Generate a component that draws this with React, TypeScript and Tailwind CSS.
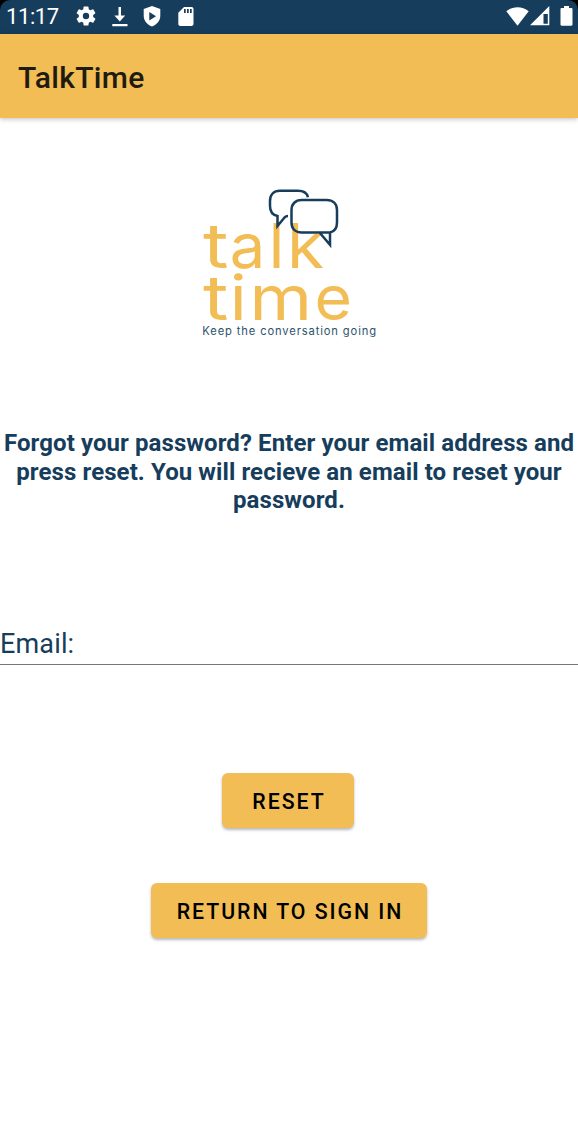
import type { ReactNode } from 'react';

function StatusBar() {
  return (
    <div className="bg-black">
      <header className="flex h-[34px] items-center rounded-t-[10px] bg-[#163d5c] pl-[6px] pr-[5px] text-white">
        <span className="w-[70px] text-[22px] leading-[34px] tracking-[-0.4px]">11:17</span>
        <svg className="-mt-[2px] h-[22px] w-[20px] shrink-0" viewBox="2 1 20 22" fill="currentColor">
          <path d="M19.14 12.94c.04-.3.06-.61.06-.94s-.02-.64-.07-.94l2.03-1.58a.49.49 0 0 0 .12-.61l-1.92-3.32a.49.49 0 0 0-.59-.22l-2.39.96a7 7 0 0 0-1.62-.94l-.36-2.54a.48.48 0 0 0-.48-.41h-3.84a.47.47 0 0 0-.47.41l-.36 2.54c-.59.24-1.13.57-1.62.94l-2.39-.96a.48.48 0 0 0-.59.22L2.74 8.87a.48.48 0 0 0 .12.61l2.03 1.58a6 6 0 0 0 0 1.88l-2.03 1.58a.49.49 0 0 0-.12.61l1.92 3.32c.12.22.37.29.59.22l2.39-.96c.5.38 1.03.7 1.62.94l.36 2.54c.05.24.24.41.48.41h3.84c.24 0 .44-.17.47-.41l.36-2.54a7 7 0 0 0 1.62-.94l2.39.96c.22.08.47 0 .59-.22l1.92-3.32a.48.48 0 0 0-.12-.61zM12 15.2a3.200 3.200 0 1 1 0-6.400 3.200 3.200 0 0 1 0 6.400z" />
        </svg>
        <svg className="ml-[16px] h-[20px] w-[16px] shrink-0" viewBox="0 0 16 20" fill="currentColor">
          <path d="M6.500 0h2.500v8.500h4.200L7.800 14.500 2.400 8.500h4.100zM.3 17h15.200v2.200H.3z" />
        </svg>
        <svg className="-mt-[1px] ml-[15px] h-[21px] w-[18px] shrink-0" viewBox="0 0 18 21" fill="currentColor">
          <path fillRule="evenodd" d="M9 0 17.300 3v6.500c0 5.200-3.400 9.200-8.300 11-4.900-1.800-8.300-5.800-8.300-11V3zM6.300 6v8.400l6.700-4.200z" />
        </svg>
        <svg className="-mt-[2px] ml-[17px] h-[19px] w-[16px] shrink-0" viewBox="0 0 16 19" fill="currentColor">
          <path fillRule="evenodd" d="M6 0h7.600c1.100 0 1.900.8 1.900 1.900v15.200c0 1.100-.8 1.900-1.900 1.900H2.200C1.100 19 .3 18.200.3 17.100V5.700zM6 2v4h1.700V2zm3 0v4h1.700V2zm3 0v4h1.700V2z" />
        </svg>
        <div className="-mt-[2px] ml-auto flex items-center">
          <svg className="h-[19px] w-[23px]" viewBox="0 0 23 19" fill="currentColor">
            <path d="M.3 4.300C6.900-1.200 16.100-1.200 22.700 4.300L11.500 18.700z" />
          </svg>
          <svg className="ml-[1px] h-[20px] w-[20px]" viewBox="0 0 20 20" fill="currentColor">
            <path fillRule="evenodd" d="M19.300 0v19.300H0zM13.500 8v9.700h4.300V8z" />
          </svg>
          <svg className="ml-[10px] h-[20px] w-[13px]" viewBox="0 0 13 20" fill="currentColor">
            <path d="M4 0h5v2h2.300c.7 0 1.200.5 1.200 1.200v15.300c0 .7-.5 1.200-1.200 1.200H1.700c-.7 0-1.200-.5-1.200-1.200V3.200C.5 2.500 1 2 1.700 2H4z" />
          </svg>
        </div>
      </header>
    </div>
  );
}

type Glyph = { char: string; x: number; width: number };

const talk: Glyph[] = [
  { char: 't', x: 13, width: 25.5 },
  { char: 'a', x: 39.8, width: 35.5 },
  { char: 'l', x: 78.5, width: 16 },
  { char: 'k', x: 97, width: 37 },
];

const time: Glyph[] = [
  { char: 't', x: 13, width: 25.5 },
  { char: 'i', x: 39.8, width: 17 },
  { char: 'm', x: 59.5, width: 62.5 },
  { char: 'e', x: 124.5, width: 37.5 },
];

function Word({ glyphs, y }: { glyphs: Glyph[]; y: number }) {
  return (
    <text y={y}>
      {glyphs.map((g) => (
        <tspan key={g.char} x={g.x} textLength={g.width} lengthAdjust="spacingAndGlyphs">
          {g.char}
        </tspan>
      ))}
    </text>
  );
}

function Logo() {
  return (
    <svg
      className="ml-[190px] block h-[170px] w-[200px]"
      viewBox="0 0 200 170"
      fontFamily="Inter, sans-serif"
      role="img"
    >
      <g fill="#f1bd54" fontSize="61.500" fontWeight="440">
        <Word glyphs={talk} y={92.5} />
        <Word glyphs={time} y={145} />
      </g>
      <text x="12.300" y="160" fill="#2c536b" fontSize="11.200" textLength="173.800" lengthAdjust="spacing">
        Keep the conversation going
      </text>
      <g fill="none" stroke="#163d5c" strokeWidth="2.500">
        <path d="M118 22.300C117 18 113 15.800 108 15.800H90C83.500 15.800 80 20 80 26v5c0 5 2.500 9 7.500 10v10l7-8.500c1-1 2-1.500 3.500-1.500" />
        <path d="M140 57.500H111.500c-6.500 0-10-4-10-10V35c0-6 4-10 10-10h25c6.500 0 10.500 4 10.500 10v12.500c0 5.500-2.500 9-7 10v12.300L129.500 57.500" />
      </g>
    </svg>
  );
}

function ActionButton({ width, children }: { width: string; children: ReactNode }) {
  return (
    <button
      className={`${width} h-[55px] rounded-[6px] bg-[#f2bd54] pl-[2px] pt-[3px] text-[21.300px] font-medium tracking-[1.950px] text-black shadow-[0_2px_3px_rgba(0,0,0,0.28)]`}
    >
      {children}
    </button>
  );
}

export default function App() {
  return (
    <div className="flex h-[1132px] w-[578px] flex-col overflow-hidden bg-white font-['Roboto',sans-serif]">
      <StatusBar />
      <div className="flex h-[84px] shrink-0 items-center bg-[#f2bd54] pl-[18px] pt-[3px] shadow-[0_1px_5px_rgba(0,0,0,0.25)]">
        <h1 className="text-[30px] font-medium leading-none tracking-[0.350px] text-[#201b10]">TalkTime</h1>
      </div>
      <main className="flex flex-col pt-[57px]">
        <Logo />
        <p className="mt-[84px] whitespace-nowrap text-center text-[24px] font-bold leading-[28.500px] tracking-[0.090px] text-[#163d5c]">
          Forgot your password? Enter your email address and
          <br />
          press reset. You will recieve an email to reset your
          <br />
          password.
        </p>
        <label className="mt-[104px] flex h-[46px] items-center border-b border-[#777] pt-[7px] text-[27px] leading-none tracking-[0.150px] text-[#163d5c]">
          Email:
        </label>
        <div className="mt-[108px] flex flex-col items-center gap-[55px]">
          <div className="pr-[2px]">
            <ActionButton width="w-[132px]">RESET</ActionButton>
          </div>
          <ActionButton width="w-[276px]">RETURN TO SIGN IN</ActionButton>
        </div>
      </main>
    </div>
  );
}
